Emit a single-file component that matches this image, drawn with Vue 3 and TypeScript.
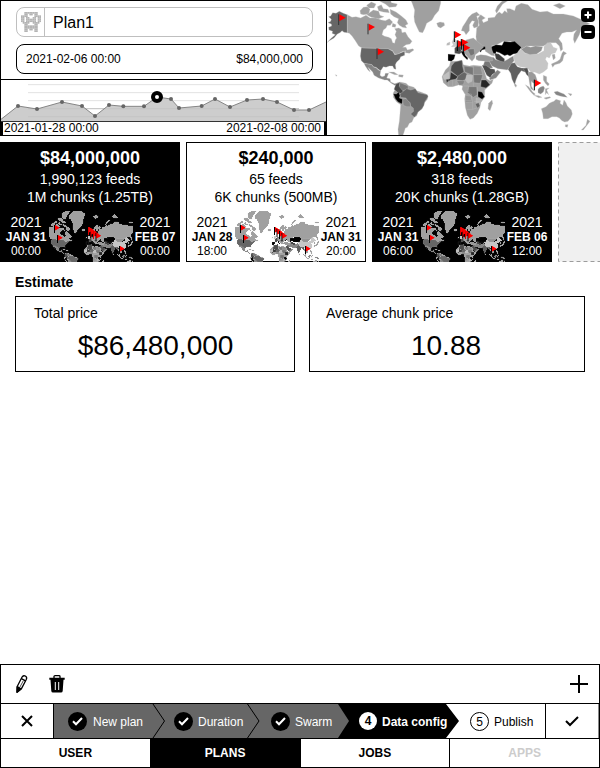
<script setup lang="ts">
interface Card {
  price: string
  feeds: string
  chunks: string
  from: [string, string, string]
  to: [string, string, string]
  light?: boolean
}

interface Land {
  fill: string
  points: string
}

const cards: Card[] = [
  { price: '$84,000,000', feeds: '1,990,123 feeds', chunks: '1M chunks (1.25TB)', from: ['2021', 'JAN 31', '00:00'], to: ['2021', 'FEB 07', '00:00'] },
  { price: '$240,000', feeds: '65 feeds', chunks: '6K chunks (500MB)', from: ['2021', 'JAN 28', '18:00'], to: ['2021', 'JAN 31', '20:00'], light: true },
  { price: '$2,480,000', feeds: '318 feeds', chunks: '20K chunks (1.28GB)', from: ['2021', 'JAN 31', '06:00'], to: ['2021', 'FEB 06', '12:00'] },
]

const americas: Land[] = [
  { fill: '#666', points: '8,50 14,48 20,38 30,40 40,34 52,40 64,44 64,98 54,97 48,92 42,98 34,102 24,114 10,122 3,128 14,116 28,104 18,100 20,94 9,90 8,82 17,78 16,72 6,68 14,64 16,58' },
  { fill: '#a0a0a0', points: '64,44 78,52 90,50 104,54 120,46 132,54 150,54 166,60 178,62 190,56 200,66 193,76 184,76 180,84 172,90 168,104 176,109 188,112 196,116 200,128 206,130 208,120 212,114 207,104 211,94 206,86 218,84 226,88 228,98 238,96 246,110 258,124 252,132 240,134 230,142 240,142 244,150 260,146 264,150 250,160 238,158 238,152 226,156 216,162 206,162 200,152 186,146 108,144 98,138 88,122 78,108 70,100 64,98' },
  { fill: '#a0a0a0', points: '102,32 112,22 124,20 132,28 128,42 112,44 104,42' },
  { fill: '#a0a0a0', points: '122,44 142,30 158,34 162,46 174,50 158,56 136,52' },
  { fill: '#a0a0a0', points: '122,16 136,6 150,12 144,24 128,24' },
  { fill: '#a0a0a0', points: '154,20 166,14 172,26 186,28 190,38 172,36 158,32' },
  { fill: '#a0a0a0', points: '192,28 210,36 226,48 240,60 246,72 238,76 242,84 230,82 220,76 214,68 218,56 204,50 194,42' },
  { fill: '#a0a0a0', points: '150,-12 176,-18 192,-8 196,8 214,12 210,20 190,22 178,12 162,4' },
  { fill: '#a0a0a0', points: '182,-50 214,-69 250,-69 232,-48 222,-30 212,-6 194,-8 186,-24' },
  { fill: '#a0a0a0', points: '200,70 210,74 208,82 198,80' },
  { fill: '#a0a0a0', points: '236,-30 252,-54 270,-69 330,-69 356,-50 352,-22 344,-4 344,10 338,32 326,46 318,60 302,70 296,86 290,98 280,96 274,84 266,66 264,50 266,30 258,8 250,-8 238,-14' },
  { fill: '#a0a0a0', points: '332,70 342,66 354,68 356,76 344,84 336,80' },
  { fill: '#666', points: '106,144 186,146 200,154 206,164 216,162 236,154 236,166 224,170 221,178 212,186 208,194 210,208 204,206 200,198 190,198 180,202 172,200 164,212 157,208 150,202 142,200 138,194 114,190 106,182 103,168' },
  { fill: '#858585', points: '114,190 138,194 142,201 150,203 157,210 164,213 162,226 168,230 176,228 178,220 188,220 182,234 192,236 194,246 206,251 216,248 218,256 206,256 196,250 184,240 176,240 158,234 144,226 140,216 126,202 133,216 126,210 118,198' },
  { fill: '#a0a0a0', points: '188,216 204,216 216,224 206,224 196,220' },
  { fill: '#a0a0a0', points: '218,224 232,225 230,232 218,230' },
  { fill: '#a0a0a0', points: '212,250 222,246 240,250 248,257 264,262 272,272 284,276 300,282 306,288 304,298 294,310 288,326 276,336 272,348 264,352 258,366 250,370 244,382 238,384 234,397 230,408 218,410 216,388 220,364 222,340 224,314 212,306 202,292 202,278 208,268' },
  { fill: '#4a4a4a', points: '210,252 222,247 220,258 232,264 230,280 218,280 204,268' },
  { fill: '#777', points: '222,248 246,258 246,268 230,272 220,260' },
  { fill: '#000', points: '202,281 211,282 218,276 222,286 220,294 230,298 228,312 216,306 208,296' },
  { fill: '#666', points: '232,274 242,266 254,270 268,266 276,278 304,284 306,290 296,306 294,316 288,326 276,336 272,344 265,352 254,342 263,334 262,324 254,318 252,308 244,302 240,294 224,292 222,282' },
  { fill: '#858585', points: '230,298 240,296 252,308 254,320 242,320 232,316' },
  { fill: '#a0a0a0', points: '28,224 33,226 31,229' },
]

const africa: Land[] = [
  { fill: '#a0a0a0', points: '62,124 80,124 96,121 100,134 118,138 130,136 154,138 162,150 170,176 180,182 190,178 186,190 164,210 164,232 152,248 150,262 142,280 130,294 120,298 112,286 106,262 104,236 106,224 96,208 98,198 88,194 68,200 54,200 40,188 36,170 46,150 58,138' },
  { fill: '#c0c0c0', points: '38,168 58,154 58,176 42,178' },
  { fill: '#4d4d4d', points: '64,138 74,126 96,121 98,140 102,156 84,170 62,152' },
  { fill: '#333', points: '62,156 84,170 76,178 62,180 50,188 48,178 60,176' },
  { fill: '#666', points: '84,168 102,156 112,162 108,178 98,182 80,180' },
  { fill: '#777', points: '102,138 130,142 130,166 104,156' },
  { fill: '#8d8d8d', points: '130,138 152,140 158,164 130,164' },
  { fill: '#bdbdbd', points: '110,164 128,166 126,184 114,190 106,180' },
  { fill: '#767676', points: '130,164 158,164 154,180 150,190 132,188' },
  { fill: '#262626', points: '154,180 168,180 180,194 168,204 152,200' },
  { fill: '#858585', points: '80,182 104,182 100,194 88,196' },
  { fill: '#777', points: '116,200 140,200 142,224 130,232 112,218' },
  { fill: '#949494', points: '106,226 124,228 128,246 106,248' },
  { fill: '#000', points: '144,214 156,216 164,230 156,238 144,230' },
  { fill: '#b0b0b0', points: '138,234 156,238 150,256 138,248' },
  { fill: '#606060', points: '136,252 146,248 150,258 142,264' },
  { fill: '#a0a0a0', points: '176,250 186,240 188,250 180,272 174,266' },
  { fill: '#c9c9c9', points: '66,66 72,54 78,60 86,76 76,80 64,80 70,74' },
  { fill: '#b8b8b8', points: '51,70 60,66 59,75 50,76' },
  { fill: '#4a4a4a', points: '74,84 84,76 96,80 94,98 88,102 74,100' },
  { fill: '#000', points: '54,102 76,104 72,118 64,124 54,122' },
  { fill: '#777', points: '92,64 110,62 110,84 92,86' },
  { fill: '#a0a0a0', points: '108,60 130,54 154,74 162,80 144,98 136,104 134,114 126,124 114,112 102,98 92,90' },
  { fill: '#000', points: '92,94 102,94 106,106 114,114 112,120 100,108' },
  { fill: '#777', points: '112,88 132,86 134,102 122,108' },
]

const asia: Land[] = [
  { fill: '#a0a0a0', points: '4,92 8,80 16,68 26,52 36,42 50,36 60,46 50,48 56,66 54,80 42,84 38,76 44,64 36,62 28,74 28,92 18,104 12,94' },
  { fill: '#a0a0a0', points: '48,110 50,84 58,76 54,54 62,44 76,54 66,60 70,68 84,62 84,54 104,52 110,42 118,36 126,42 134,32 142,38 140,26 150,26 164,32 168,18 184,10 204,14 216,28 240,36 262,34 280,42 310,42 340,48 372,62 390,72 372,78 362,92 358,104 344,130 340,118 342,102 350,90 336,96 320,96 306,100 296,116 306,130 308,148 302,154 298,138 288,128 270,128 250,138 200,138 184,148 170,130 150,124 130,124 110,134 94,138 100,152 104,168 94,166 76,154 74,142 60,134 50,126' },
  { fill: '#a0a0a0', points: '106,32 112,18 126,4 140,-2 144,2 128,12 116,30 110,40' },
  { fill: '#a0a0a0', points: '16,-28 40,-40 58,-30 46,-16 30,-8' },
  { fill: '#a0a0a0', points: '156,-28 176,-44 200,-20 190,-12 170,-18' },
  { fill: '#a0a0a0', points: '280,16 298,10 316,18 300,26' },
  { fill: '#000', points: '36,141 46,136 56,132 62,136 76,140 76,148 66,150 62,157 56,151 38,149' },
  { fill: '#000', points: '94,140 108,134 126,136 132,124 152,126 164,124 184,142 176,154 178,160 160,162 150,168 142,164 134,167 118,158 108,155 108,163 100,160 96,150' },
  { fill: '#858585', points: '82,174 100,172 108,180 136,182 160,168 162,182 150,198 142,210 128,208 114,206 96,198' },
  { fill: '#404040', points: '104,160 116,162 134,177 132,186 120,183 108,178' },
  { fill: '#999', points: '48,168 62,164 78,166 96,172 98,182 82,184 56,182 48,178' },
  { fill: '#777', points: '74,184 88,184 98,204 82,204 70,196' },
  { fill: '#4d4d4d', points: '66,196 78,196 92,206 104,208 106,218 96,224 92,234 80,226' },
  { fill: '#858585', points: '88,235 104,218 112,210 122,216 108,234 90,240' },
  { fill: '#c6c6c6', points: '160,168 172,158 178,150 184,148 194,160 212,164 234,162 252,152 252,140 262,128 272,128 280,142 292,146 286,158 274,162 268,174 260,170 256,178 264,190 262,206 250,216 238,222 224,216 214,218 206,208 194,202 180,200 166,192' },
  { fill: '#929292', points: '184,148 200,138 212,142 226,138 248,140 244,152 230,162 210,164 194,158' },
  { fill: '#606060', points: '144,208 154,190 164,188 172,200 184,204 202,204 194,216 184,212 174,226 168,240 164,254 156,238 152,220' },
  { fill: '#4f4f4f', points: '190,206 202,204 206,216 208,232 200,224' },
  { fill: '#999', points: '204,216 216,216 226,224 232,242 220,250 214,244 214,258 222,272 212,266 208,246' },
  { fill: '#a0a0a0', points: '276,164 284,162 286,174 280,180' },
  { fill: '#a0a0a0', points: '284,194 278,202 274,192 292,184 300,178 306,160 310,154 320,160 312,166 308,182 300,190' },
  { fill: '#a0a0a0', points: '196,254 206,260 218,276 226,282 222,286 212,276' },
  { fill: '#858585', points: '234,268 240,262 250,258 254,264 250,276 242,282 234,278' },
  { fill: '#a0a0a0', points: '222,286 236,287 246,292 236,293' },
  { fill: '#a0a0a0', points: '256,266 268,264 260,270 266,284 260,278 256,284' },
  { fill: '#a0a0a0', points: '250,226 260,230 260,244 268,252 264,258 256,250 250,240' },
  { fill: '#a0a0a0', points: '252,294 260,292 270,290 272,293 258,298' },
  { fill: '#858585', points: '282,276 292,274 302,278 312,282 322,292 310,290 300,288 288,284' },
  { fill: '#a0a0a0', points: '324,280 336,282 332,288' },
  { fill: '#a0a0a0', points: '244,326 258,320 268,310 276,306 282,304 288,298 302,302 300,310 308,316 312,300 318,308 322,318 334,330 337,342 332,354 324,364 314,366 306,362 298,354 290,350 276,350 264,356 250,356 248,340' },
  { fill: '#a0a0a0', points: '316,374 324,374 322,382 316,380' },
  { fill: '#a0a0a0', points: '382,358 390,364 384,372 370,390 364,390 378,376' },
  { fill: '#a0a0a0', points: '164,250 170,256 168,262 164,258' },
]

/* flag pole tops, on the world grid */
const flags: [number, number][] = [[38, 42], [126, 70], [153, 144], [385, 93], [394, 120], [406, 116], [412, 132], [625, 238]]
const miniFlags: [number, number][] = [[5.5, 14], [8.5, 24], [39.5, 16], [42, 18], [44.5, 20], [47, 22], [70.5, 35]]

const series: [number, number][] = [
  [54, 78], [111, 87], [186, 66], [246, 78], [285, 108], [327, 75], [370, 79], [432, 79], [471, 51], [513, 57],
  [537, 84], [605, 78], [645, 57], [690, 81], [741, 60], [789, 57], [831, 66], [882, 90], [927, 90],
]
const line = `3,118 ${series.map((p) => p.join(',')).join(' ')} 978,66`
const gridLines = [14, 38, 62, 86, 110]

const avatar = [
  '..########..',
  '..##.##.##..',
  '####....####',
  '##.##..##.##',
  '##.######.##',
  '##.######.##',
  '.####..####.',
  '..##....##..',
  '..########..',
  '..########..',
  '..##.##.##..',
  '..##....##..',
]

const tabs = ['USER', 'PLANS', 'JOBS', 'APPS']
</script>

<template>
  <main class="app">
    <header class="top">
      <section class="plan">
        <div class="fields">
          <div class="name-field">
            <svg class="avatar" viewBox="0 0 12 12">
              <template v-for="(row, y) in avatar" :key="y">
                <template v-for="(c, x) in row.split('')" :key="x">
                  <rect v-if="c === '#'" :x="x" :y="y" width="1.05" height="1.05" fill="#b4b4b4" />
                </template>
              </template>
            </svg>
            <span>Plan1</span>
          </div>
          <div class="point-field"><span>2021-02-06 00:00</span><span>$84,000,000</span></div>
        </div>
        <div class="chart">
          <svg viewBox="3 0 975 123" preserveAspectRatio="none">
            <line v-for="g in gridLines" :key="g" x1="84" x2="897" :y1="g" :y2="g" stroke="#e2e2e2" stroke-width="3" />
            <polygon :points="line + ' 978,123 3,123'" fill="#cdcdcd" />
            <path d="M84 86H897M84 110H897" stroke="#c5c5c5" stroke-width="3" />
            <polyline :points="line" fill="none" stroke="#858585" stroke-width="3" />
            <circle v-for="(p, i) in series" :key="i" :cx="p[0]" :cy="p[1]" r="6" fill="#666" />
            <circle cx="471" cy="51" r="12" fill="#fff" stroke="#000" stroke-width="12" />
          </svg>
        </div>
        <div class="range"><span>2021-01-28 00:00</span><span>2021-02-08 00:00</span></div>
      </section>
      <section class="map">
        <svg class="world" viewBox="3 3 816 402">
          <defs>
            <g id="world-land" stroke="#c4c4c4" stroke-width="0.9" stroke-linejoin="round">
              <polygon v-for="(l, i) in americas" :key="i" :points="l.points" :fill="l.fill" />
              <g transform="translate(402 0)">
                <polygon v-for="(l, i) in asia" :key="i" :points="l.points" :fill="l.fill" />
              </g>
              <g transform="translate(312 60)">
                <polygon v-for="(l, i) in africa" :key="i" :points="l.points" :fill="l.fill" />
                <path d="M58 140V154M42 178H56V200M68 180V200M78 182V198M100 198H116V216M104 222H124V242H106M128 246V268H110M128 268L140 264M142 200V230M164 204V220M130 188V200M132 244H150" fill="none" />
              </g>
            </g>
          </defs>
          <use href="#world-land" />
          <g v-for="(f, i) in flags" :key="i" :transform="`translate(${f[0]} ${f[1]})`">
            <path d="M2 1L21 11L2 22Z" fill="#f00" />
            <path d="M0 1V33" :stroke="i < 3 ? '#333' : '#000'" stroke-width="3" />
          </g>
        </svg>
        <div class="zoom">
          <button aria-label="Zoom in"><svg viewBox="0 0 14 14"><path d="M3.5 7h7M7 3.5v7" stroke="#fff" stroke-width="2" /></svg></button>
          <button aria-label="Zoom out"><svg viewBox="0 0 14 14"><path d="M3.5 7h7" stroke="#fff" stroke-width="2" /></svg></button>
        </div>
      </section>
    </header>

    <section class="cards">
      <article v-for="c in cards" :key="c.price" class="card" :class="{ light: c.light }">
        <strong class="price">{{ c.price }}</strong>
        <span class="line">{{ c.feeds }}</span>
        <span class="line">{{ c.chunks }}</span>
        <div class="period">
          <div class="date"><span class="year">{{ c.from[0] }}</span><b>{{ c.from[1] }}</b><span>{{ c.from[2] }}</span></div>
          <svg class="mini" viewBox="0 0 84 51">
            <g transform="scale(.13333) translate(-87 69)" shape-rendering="crispEdges"><use href="#world-land" /></g>
            <g v-for="(f, i) in miniFlags" :key="i" :transform="`translate(${f[0]} ${f[1]})`">
              <path d="M0 0L5 2.7L0 5.5Z" fill="#f00" />
              <path d="M0 0V8" :stroke="c.light ? '#000' : i > 1 && i < 5 ? '#d00' : '#000'" />
              <path d="M0.500 0L5 2.700L0.500 5.500Z" fill="#f00" />
            </g>
          </svg>
          <div class="date"><span class="year">{{ c.to[0] }}</span><b>{{ c.to[1] }}</b><span>{{ c.to[2] }}</span></div>
        </div>
      </article>
      <svg class="slot" viewBox="0 0 42 120">
        <rect x=".5" y=".5" width="60" height="119" fill="#f0f0f0" stroke="#9c9c9c" stroke-dasharray="4 3" />
      </svg>
    </section>

    <section class="estimate">
      <h2>Estimate</h2>
      <div class="boxes">
        <div class="box total"><span>Total price</span><p>$86,480,000</p></div>
        <div class="box average"><span>Average chunk price</span><p>10.88</p></div>
      </div>
    </section>

    <footer>
      <div class="toolbar">
        <svg class="pencil" viewBox="0 0 14 20" fill="none" stroke="#000" stroke-width="1.3" stroke-linejoin="round">
          <path d="M2.200 12.500L7.200 2.800Q8.500 1.200 10.300 2Q12.300 3.200 11.400 5.200L6.200 15.100L2 18.200Z" />
          <path d="M6.400 4.600L10.500 6.900M2.200 12.500L6.200 15.100" />
          <path d="M8.300 6.800L4.600 13.600" stroke-width=".7" />
          <path d="M2.200 13L5.600 15.200L2 18.200Z" fill="#000" />
        </svg>
        <svg class="trash" viewBox="0 0 16 18">
          <path d="M5 3V1.5Q5 .7 6 .7H10Q11 .7 11 1.5V3" fill="none" stroke="#000" stroke-width="1.3" />
          <path d="M.3 2.800H15.700V4.800H14.500L13.700 16Q13.500 17.500 12 17.500H4Q2.500 17.500 2.300 16L1.500 4.800H.3Z" />
          <path d="M6.300 7V15M9.700 7V15" stroke="#fff" stroke-width="1" />
        </svg>
        <svg class="plus" viewBox="0 0 18 18"><path d="M0 9H18M9 0V18" stroke="#000" stroke-width="2" /></svg>
      </div>
      <div class="steps">
        <button class="cancel" aria-label="Cancel"><svg viewBox="0 0 12 12"><path d="M1 1L11 11M11 1L1 11" stroke="#000" stroke-width="2" /></svg></button>
        <div class="track">
          <svg class="arrows" viewBox="0 0 491 34">
            <path d="M0 0H285L296 17L285 34H0Z" fill="#666" />
            <path d="M284 0H392L405 17L392 34H284L295 17Z" fill="#000" />
            <path d="M99 0L110.500 17L99 34M193.500 0L205 17L193.500 34" fill="none" stroke="#000" />
          </svg>
          <div v-for="s in ['New plan', 'Duration', 'Swarm']" :key="s" class="step done">
            <svg viewBox="0 0 19 19"><circle cx="9.500" cy="9.500" r="9.500" /><path d="M5 9.300L8 12.300L14 6" fill="none" stroke="#fff" stroke-width="2" /></svg>
            <span>{{ s }}</span>
          </div>
          <div class="step current"><i>4</i><b>Data config</b></div>
          <div class="step next"><i>5</i><span>Publish</span></div>
        </div>
        <button class="confirm" aria-label="Confirm"><svg viewBox="0 0 14 12"><path d="M1 6L5 10L13 2" fill="none" stroke="#000" stroke-width="2" /></svg></button>
      </div>
      <nav class="tabs">
        <a v-for="t in tabs" :key="t" :class="{ active: t === 'PLANS', off: t === 'APPS' }">{{ t }}</a>
      </nav>
    </footer>
  </main>
</template>

<style>
body { margin: 0; background: #fff; overflow: hidden; }
</style>

<style scoped>
.app { width: 600px; height: 768px; display: flex; flex-direction: column; font-family: "Liberation Sans", Arial, sans-serif; font-size: 12px; color: #000; overflow: hidden; }
.app *, .app { box-sizing: border-box; }
svg { display: block; }
button { border: 0; padding: 0; background: none; display: flex; align-items: center; justify-content: center; }
.top { display: flex; height: 136px; border: 1px solid #000; }
.plan { width: 326px; border-right: 1px solid #000; display: flex; flex-direction: column; }
.fields { flex: none; height: 79px; padding: 6px 13px 0 15px; border-bottom: 1px solid #000; display: flex; flex-direction: column; gap: 7px; }
.name-field { height: 30px; flex: none; display: flex; align-items: center; border: 1px solid #bfbfbf; border-radius: 8px; font-size: 16px; }
.name-field span { height: 28px; line-height: 29px; border-left: 1px solid #bfbfbf; padding-left: 8px; }
.avatar { width: 20px; height: 20px; margin: 0 3px 0 4px; }
.point-field { height: 30px; flex: none; display: flex; justify-content: space-between; align-items: center; padding: 0 9px; border: 1px solid #000; border-radius: 8px; }
.chart { flex: none; height: 42px; border-bottom: 1px solid #333; }
.chart svg { width: 325px; height: 41px; }
.range { height: 13px; display: flex; justify-content: space-between; border-left: 2px solid #000; border-right: 2px solid #000; padding: 0 3px 0 1px; line-height: 13px; }
.map { position: relative; flex: 1; }
.world { width: 272px; height: 134px; }
.zoom { position: absolute; top: 7px; right: 4px; display: flex; flex-direction: column; gap: 3px; }
.zoom button { width: 14px; height: 14px; border-radius: 4px; background: #000; }
.zoom svg { width: 14px; height: 14px; }
.cards { display: flex; gap: 6px; margin-top: 6px; height: 120px; }
.card { flex: none; width: 180px; height: 120px; background: #000; color: #fff; border: 1px solid #000; display: flex; flex-direction: column; align-items: center; }
.card.light { background: #fff; color: #000; }
.price { font-size: 18px; line-height: 20px; margin-top: 5px; margin-bottom: 2px; }
.line { font-size: 14px; line-height: 18px; }
.period { display: flex; width: 178px; height: 51px; margin-top: 5px; }
.date { flex: none; width: 48px; display: flex; flex-direction: column; align-items: center; line-height: 14px; padding: 3px 0 0 2px; white-space: nowrap; }
.date:last-child { padding-left: 0; width: 44px; }
.date .year { font-size: 14px; line-height: 17px; }
.date b { line-height: 13px; }
.mini { flex: none; width: 84px; height: 51px; }
.slot { flex: none; width: 42px; height: 120px; }
.estimate { padding: 11px 15px 0; }
h2 { margin: 0; font-size: 14px; line-height: 18px; }
.boxes { display: flex; gap: 14px; margin-top: 5px; }
.box { height: 76px; border: 1px solid #000; font-size: 14px; padding-top: 8px; line-height: 16px; }
.total { width: 280px; padding-left: 18px; }
.average { width: 276px; padding-left: 16px; }
.box p { margin: 8px 0 0 -17px; font-size: 28px; line-height: 34px; text-align: center; }
.average p { margin-left: -18px; }
footer { margin-top: auto; height: 104px; border: 1px solid #000; }
.toolbar { height: 39px; border-bottom: 1px solid #000; display: flex; align-items: center; padding: 0 11px 0 14px; }
.pencil { width: 14px; height: 20px; }
.trash { width: 16px; height: 18px; margin-left: 20px; }
.plus { width: 18px; height: 18px; margin-left: auto; }
.steps { display: flex; height: 35px; border-bottom: 1px solid #000; }
.cancel { width: 53px; border-right: 1px solid #000; }
.cancel svg { width: 12px; height: 12px; }
.track { position: relative; width: 491px; display: flex; }
.arrows { position: absolute; left: 0; top: 0; width: 491px; height: 34px; }
.step { position: relative; display: flex; align-items: center; white-space: nowrap; width: 107px; padding-left: 14px; gap: 6px; }
.step span, .step b { padding-top: 2px; }
.done { color: #fff; }
.done:nth-of-type(2) { width: 95px; padding-left: 13px; gap: 5px; }
.done:nth-of-type(3) { width: 91px; padding-left: 15px; gap: 5px; }
.step svg { width: 19px; height: 19px; }
.step i { width: 18px; height: 18px; border-radius: 50%; font-style: normal; text-align: center; line-height: 18px; flex: none; }
.current { color: #fff; width: 110px; padding-left: 12px; gap: 5px; }
.current i { background: #fff; color: #000; font-weight: bold; }
.next { width: 88px; padding-left: 13px; gap: 5px; }
.next i { width: 19px; height: 19px; border: 1px solid #000; line-height: 18px; }
.confirm { flex: 1; border-left: 1px solid #000; border-right: 1px solid #888; }
.confirm svg { width: 14px; height: 12px; }
.tabs { display: flex; height: 28px; }
.tabs a { flex: 1; display: flex; align-items: center; justify-content: center; font-weight: bold; border-left: 1px solid #000; }
.tabs a:first-child { border-left: 0; }
.tabs a.active { background: #000; color: #fff; }
.tabs a.off { color: #ccc; border-left-color: #000; }
</style>
